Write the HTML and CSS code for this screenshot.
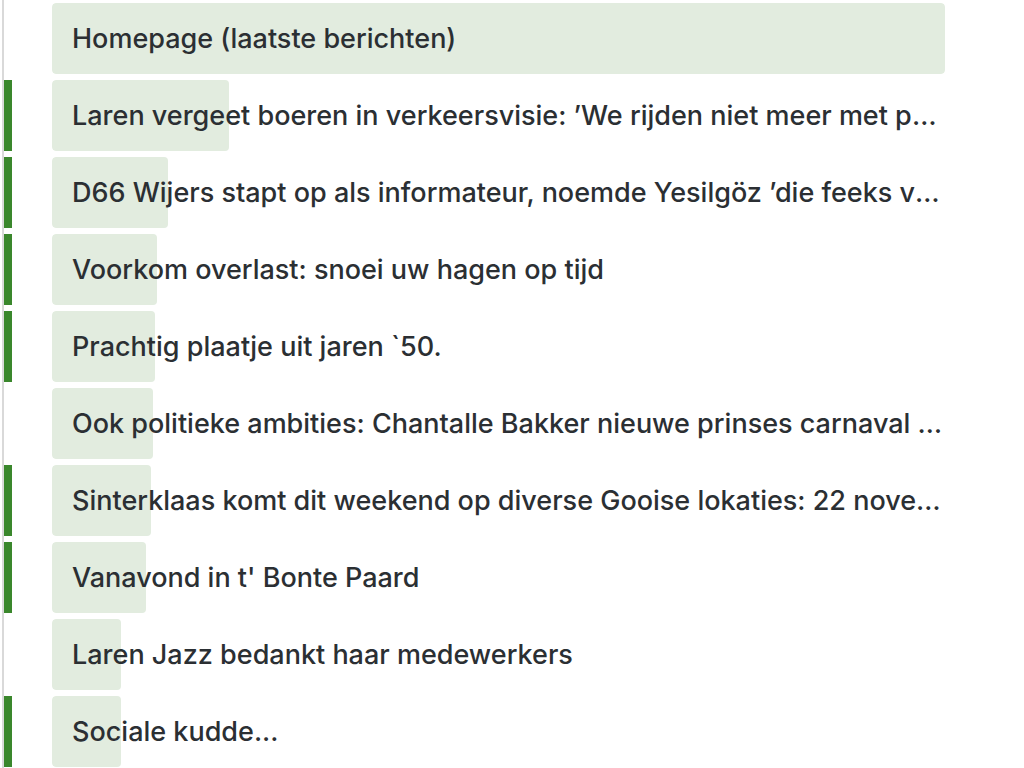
FILE: index.html
```html
<!DOCTYPE html>
<html lang="nl">
<head>
<meta charset="utf-8">
<title>Berichten</title>
<link rel="stylesheet" href="styles.css">
</head>
<body>
<ul class="list">
  <li class="row"><span class="marker"></span><a class="item"><span class="fill" style="width:100%"></span><span class="label">Homepage (laatste berichten)</span></a></li>
  <li class="row"><span class="marker on"></span><a class="item"><span class="fill" style="width:19.82%"></span><span class="label">Laren vergeet boeren in verkeersvisie: ’We rijden niet meer met paard en wagen’</span></a></li>
  <li class="row"><span class="marker on"></span><a class="item"><span class="fill" style="width:12.99%"></span><span class="label">D66 Wijers stapt op als informateur, noemde Yesilgöz ’die feeks van de VVD’</span></a></li>
  <li class="row"><span class="marker on"></span><a class="item"><span class="fill" style="width:11.76%"></span><span class="label">Voorkom overlast: snoei uw hagen op tijd</span></a></li>
  <li class="row"><span class="marker on"></span><a class="item"><span class="fill" style="width:11.53%"></span><span class="label">Prachtig plaatje uit jaren `50.</span></a></li>
  <li class="row"><span class="marker"></span><a class="item"><span class="fill" style="width:11.31%"></span><span class="label">Ook politieke ambities: Chantalle Bakker nieuwe prinses carnaval Laren</span></a></li>
  <li class="row"><span class="marker on"></span><a class="item"><span class="fill" style="width:11.09%"></span><span class="label">Sinterklaas komt dit weekend op diverse Gooise lokaties: 22 november</span></a></li>
  <li class="row"><span class="marker on"></span><a class="item"><span class="fill" style="width:10.53%"></span><span class="label">Vanavond in t' Bonte Paard</span></a></li>
  <li class="row"><span class="marker"></span><a class="item"><span class="fill" style="width:7.73%"></span><span class="label">Laren Jazz bedankt haar medewerkers</span></a></li>
  <li class="row"><span class="marker on"></span><a class="item"><span class="fill" style="width:7.73%"></span><span class="label">Sociale kudde...</span></a></li>
</ul>
</body>
</html>
```
FILE: styles.css
```css
html, body {
  margin: 0;
  padding: 0;
  background: #ffffff;
  height: 100%;
  overflow: hidden;
}

.list {
  list-style: none;
  margin: 0 0 0 2px;
  padding: 3px 0 0 0;
  border-left: 2px solid #d9d9d9;
  min-height: 100%;
  box-sizing: border-box;
  display: flex;
  flex-direction: column;
  gap: 6px;
  font-family: Inter, "Liberation Sans", sans-serif;
}

.row {
  display: flex;
  height: 71px;
  flex: none;
}

.marker {
  width: 8px;
  flex: none;
}

.marker.on {
  background: #3a872c;
}

.item {
  position: relative;
  margin-left: 40px;
  width: 893px;
  display: flex;
  align-items: center;
  border-radius: 4px;
  overflow: hidden;
  color: #2b2f33;
  text-decoration: none;
}

.fill {
  position: absolute;
  left: 0;
  top: 0;
  bottom: 0;
  background: #e2ecdf;
  border-radius: 4px;
}

.label {
  position: relative;
  padding: 0 0 0 20px;
  font-size: 27px;
  font-weight: 500;
  white-space: nowrap;
  overflow: hidden;
  text-overflow: ellipsis;
  min-width: 0;
}
```
